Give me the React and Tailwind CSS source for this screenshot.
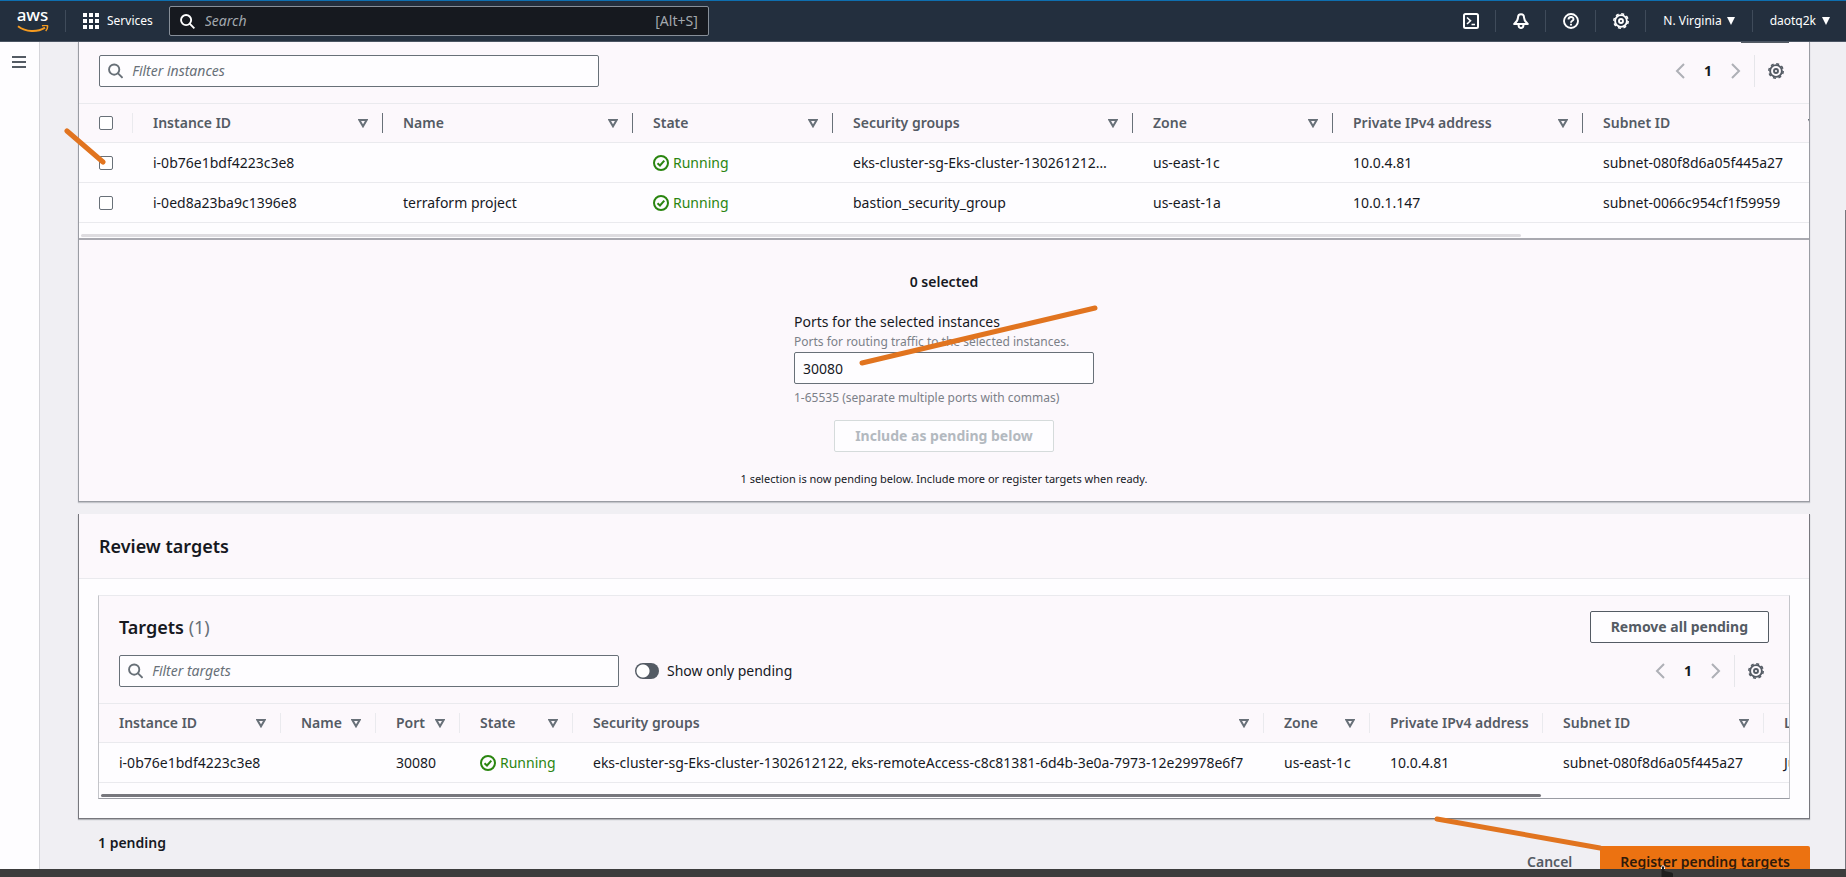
import { useState } from 'react';

const instanceCols = [
  { label: 'Instance ID', width: 'w-[250px]', key: 'id' },
  { label: 'Name', width: 'w-[250px]', key: 'name' },
  { label: 'State', width: 'w-[200px]', key: 'state' },
  { label: 'Security groups', width: 'w-[300px]', key: 'groups' },
  { label: 'Zone', width: 'w-[200px]', key: 'zone' },
  { label: 'Private IPv4 address', width: 'w-[250px]', key: 'ip' },
  { label: 'Subnet ID', width: 'w-[250px]', key: 'subnet' },
];

const instances = [
  {
    id: 'i-0b76e1bdf4223c3e8',
    name: '',
    state: 'Running',
    groups: 'eks-cluster-sg-Eks-cluster-130261212…',
    zone: 'us-east-1c',
    ip: '10.0.4.81',
    subnet: 'subnet-080f8d6a05f445a27',
  },
  {
    id: 'i-0ed8a23ba9c1396e8',
    name: 'terraform project',
    state: 'Running',
    groups: 'bastion_security_group',
    zone: 'us-east-1a',
    ip: '10.0.1.147',
    subnet: 'subnet-0066c954cf1f59959',
  },
];

const targetCols = [
  { label: 'Instance ID', width: 'w-[182px]', key: 'id', sort: true },
  { label: 'Name', width: 'w-[95px]', key: 'name', sort: true },
  { label: 'Port', width: 'w-[84px]', key: 'port', sort: true },
  { label: 'State', width: 'w-[113px]', key: 'state', sort: true },
  { label: 'Security groups', width: 'w-[691px]', key: 'groups', sort: true },
  { label: 'Zone', width: 'w-[106px]', key: 'zone', sort: true },
  { label: 'Private IPv4 address', width: 'w-[173px]', key: 'ip' },
  { label: 'Subnet ID', width: 'w-[221px]', key: 'subnet', sort: true },
  { label: 'Launch time', width: 'w-[248px]', key: 'launched' },
];

const targets = [
  {
    ...instances[0],
    groups: 'eks-cluster-sg-Eks-cluster-1302612122, eks-remoteAccess-c8c81381-6d4b-3e0a-7973-12e29978e6f7',
    port: '30080',
    launched: 'June 11, 2023',
  },
];

const SearchIcon = ({ className }) => (
  <svg viewBox="0 0 16 16" className={className} fill="none" stroke="currentColor" strokeWidth="2">
    <circle cx="6.5" cy="6.5" r="5.4" />
    <path d="M10.3 10.3 15.300 15.300" />
  </svg>
);

const GearIcon = ({ className }) => (
  <svg viewBox="0 0 16 16" className={className} fill="none" stroke="currentColor">
    <circle cx="8" cy="8" r="5.900" strokeWidth="1.900" />
    <circle cx="8" cy="8" r="7.200" strokeWidth="1.500" strokeDasharray="3 2.655" />
    <circle cx="8" cy="8" r="2" strokeWidth="1.900" />
  </svg>
);

const SortIcon = () => (
  <svg viewBox="0 0 10 9" className="h-[9px] w-[10px]" fill="none" stroke="#687078" strokeWidth="2">
    <path d="M1.3 1h7.4L5 7.3z" />
  </svg>
);

const Caret = () => (
  <svg viewBox="0 0 8 8" className="h-2 w-2" fill="currentColor">
    <path d="M0 0h8L4 8z" />
  </svg>
);

const AwsLogo = () => (
  <a href="#home" aria-label="AWS" className="flex w-[65px] flex-col items-center text-white">
    <span className="text-[17px] leading-[13px] font-medium">aws</span>
    <svg viewBox="0 0 32 9" className="mt-1 h-[9px] w-8" fill="none" stroke="#f59b20" strokeWidth="2">
      <path d="M1 1.200c8 6 19 6.500 27 1.500" />
      <path d="M25 .8c2-.6 4.500-.6 5.500 0 .3 2-.5 4-1.800 5.200" strokeWidth="1.500" />
    </svg>
  </a>
);

const Running = () => (
  <span className="flex items-center gap-1 text-[#2a8510]">
    <svg viewBox="0 0 16 16" className="h-4 w-4" fill="none" stroke="currentColor" strokeWidth="2">
      <circle cx="8" cy="8" r="7" />
      <path d="m4.500 8.200 2.500 2.300 4.300-4.800" />
    </svg>
    Running
  </span>
);

const Filter = ({ label }) => (
  <label className="flex h-8 w-[500px] items-center gap-[9px] rounded-[2px] border border-[#687078] bg-[#fefdff] px-2">
    <SearchIcon className="h-4 w-4 text-[#687078]" />
    <input
      type="search"
      aria-label={label}
      placeholder={label}
      className="w-full bg-transparent text-sm outline-none placeholder:text-[#687078] placeholder:italic"
    />
  </label>
);

const Pagination = () => (
  <div className="flex h-8 items-center">
    <button type="button" aria-label="Previous page" className="px-2">
      <svg viewBox="0 0 10 16" className="h-4 w-[10px]" fill="none" stroke="#aeb0b6" strokeWidth="2">
        <path d="M9 1 2 8l7 7" />
      </svg>
    </button>
    <button type="button" className="w-[30px] text-center text-sm font-bold">1</button>
    <button type="button" aria-label="Next page" className="px-2">
      <svg viewBox="0 0 10 16" className="h-4 w-[10px]" fill="none" stroke="#aeb0b6" strokeWidth="2">
        <path d="m1 1 7 7-7 7" />
      </svg>
    </button>
    <span className="ml-[5px] h-8 w-px bg-[#e6e6ea]" />
    <button type="button" aria-label="Preferences" className="pr-[5px] pl-[13px] text-[#545b64]">
      <GearIcon className="h-4 w-4" />
    </button>
  </div>
);

const HeadCell = ({ col, sort, divider }) => (
  <th scope="col" className={`${col.width} p-0 text-left font-semibold text-[#545b64]`}>
    <div className={`flex h-5 items-center justify-between border-r pr-[14px] pl-5 ${divider}`}>
      <span className="whitespace-nowrap">{col.label}</span>
      {sort && <SortIcon />}
    </div>
  </th>
);

const Cell = ({ col, row }) => (
  <td className="py-0 pr-0 pl-5 whitespace-nowrap">{col.key === 'state' ? <Running /> : row[col.key]}</td>
);

const TopBar = () => (
  <header className="flex h-[42px] items-center border-t border-b border-t-[#0e6fb0] border-b-[#4b5563] bg-[#232f3e] text-xs text-white">
    <AwsLogo />
    <span className="h-[22px] w-px bg-[#3f4b5a]" />
    <button type="button" className="flex items-center gap-2 pr-4 pl-[17px]">
      <svg viewBox="0 0 16 16" className="h-4 w-4" fill="currentColor">
        {[0, 6, 12].map((y) => [0, 6, 12].map((x) => <rect key={`${x}-${y}`} x={x} y={y} width="4" height="4" />))}
      </svg>
      Services
    </button>
    <label className="flex h-[30px] w-[540px] items-center gap-[10px] rounded-[2px] border border-[#878f99] bg-[#16191f] px-[10px] text-sm">
      <SearchIcon className="h-[15px] w-[15px] text-white" />
      <input
        type="search"
        aria-label="Search"
        placeholder="Search"
        className="flex-1 bg-transparent outline-none placeholder:text-[#a2a8ae] placeholder:italic"
      />
      <span className="text-[#a2a8ae]">[Alt+S]</span>
    </label>
    <nav className="ml-auto flex items-center divide-x divide-[#3f4b5a]">
      <button type="button" aria-label="CloudShell" className="flex h-[22px] w-[50px] items-center justify-center">
        <svg viewBox="0 0 16 16" className="h-4 w-4" fill="none" stroke="currentColor" strokeWidth="2">
          <rect x="1" y="1" width="14" height="14" rx="1.500" />
          <path d="m4 4.500 3.500 3.300L4 11M8.500 11.500H12" strokeWidth="1.600" />
        </svg>
      </button>
      <button type="button" aria-label="Notifications" className="flex h-[22px] w-[50px] items-center justify-center">
        <svg viewBox="0 0 16 16" className="h-4 w-4" fill="none" stroke="currentColor" strokeWidth="2" strokeLinejoin="round">
          <path d="M8 1.200C5.800 1.200 5 2.700 5 4.500 5 7.500 3.500 9 1.200 11h13.600C12.500 9 11 7.500 11 4.500c0-1.800-.8-3.300-3-3.300z" />
          <path d="M5.500 11.500c0 4.700 5 4.700 5 0" />
        </svg>
      </button>
      <button type="button" aria-label="Help" className="flex h-[22px] w-[50px] items-center justify-center">
        <svg viewBox="0 0 16 16" className="h-4 w-4" fill="none" stroke="currentColor" strokeWidth="1.900">
          <circle cx="8" cy="8" r="7" />
          <path d="M5.500 6.500c0-3.200 5-3.200 5-.3 0 1.700-2.500 1.500-2.500 3.500M8 10.800v1.800" />
        </svg>
      </button>
      <button type="button" aria-label="Settings" className="flex h-[22px] w-[50px] items-center justify-center">
        <GearIcon className="h-4 w-4" />
      </button>
      <button type="button" className="flex h-[22px] items-center gap-[5px] px-[17px]">
        N. Virginia <Caret />
      </button>
      <button type="button" className="flex h-[22px] items-center gap-[6px] pr-4 pl-[17px]">
        daotq2k <Caret />
      </button>
    </nav>
  </header>
);

const InstancesCard = ({ ports, onPortsChange }) => (
  <section className="border-r border-b border-l border-[#9a9ca3] bg-[#fcf8fc] shadow-[0_1px_1px_#c4c5ca]">
    <div className="flex justify-end px-5">
      <div className="h-px w-12 bg-[#545b64]" />
    </div>
    <div className="flex items-center justify-between px-5 pt-3 pb-4">
      <Filter label="Filter instances" />
      <Pagination />
    </div>
    <div className="overflow-hidden border-b-2 border-[#a9a9b0] bg-[#fefdff]">
      <table className="w-[1754px] table-fixed border-collapse">
        <thead>
          <tr className="h-[39px] border-y border-[#eaeaee] bg-[#fcf8fc]">
            <th scope="col" className="w-[54px] p-0">
              <div className="flex h-5 items-center border-r border-[#eaeaee] pl-5">
                <input type="checkbox" aria-label="Select all" className="h-[14px] w-[14px] appearance-none rounded-[2px] border border-[#687078] bg-white" />
              </div>
            </th>
            {instanceCols.map((col) => (
              <HeadCell key={col.key} col={col} sort divider="border-[#687078]" />
            ))}
          </tr>
        </thead>
        <tbody>
          {instances.map((row) => (
            <tr key={row.id} className="h-10 border-b border-[#eaeaee]">
              <td className="p-0 pl-5">
                <input type="checkbox" aria-label={`Select ${row.id}`} className="block h-[14px] w-[14px] appearance-none rounded-[2px] border border-[#687078] bg-white" />
              </td>
              {instanceCols.map((col) => (
                <Cell key={col.key} col={col} row={row} />
              ))}
            </tr>
          ))}
        </tbody>
      </table>
      <div className="px-[2px] pt-[11px] pb-px">
        <div className="h-[3px] w-[1440px] max-w-full rounded-full bg-[#dedce0]" />
      </div>
    </div>
    <div className="flex flex-col items-center pt-8 pb-[13px]">
      <p className="font-semibold">0 selected</p>
      <div className="mt-5 flex w-[300px] flex-col">
        <label htmlFor="ports">Ports for the selected instances</label>
        <span className="text-xs leading-5 text-[#7b8088]">Ports for routing traffic to the selected instances.</span>
        <input
          id="ports"
          value={ports}
          onChange={(e) => onPortsChange(e.target.value)}
          className="h-8 rounded-[2px] border border-[#687078] bg-[#fefdff] px-2 outline-none"
        />
        <span className="mt-1 text-xs leading-5 text-[#7b8088]">1-65535 (separate multiple ports with commas)</span>
      </div>
      <button type="button" disabled className="mt-3 h-8 rounded-[2px] border border-[#d5dbdb] bg-[#fefdff] px-5 font-bold text-[#b3b9bf]">
        Include as pending below
      </button>
      <p className="mt-[18px] text-[11px] leading-[18px]">
        1 selection is now pending below. Include more or register targets when ready.
      </p>
    </div>
  </section>
);

const ReviewCard = () => (
  <section className="mt-3 border-r border-b border-l border-[#77777d] bg-[#fefdff] shadow-[0_1px_1px_#b4b5ba]">
    <div className="border-b border-[#eaeaee] bg-[#fcf8fc] px-5 py-5">
      <h2 className="text-lg leading-6 font-semibold">Review targets</h2>
    </div>
    <div className="px-[19px] pt-4 pb-[19px]">
      <div className="overflow-hidden border border-t-[#eaeaee] border-r-[#c4c5ca] border-b-[#9a9ca3] border-l-[#c4c5ca]">
        <div className="bg-[#fcf8fc] px-5 pt-[15px] pb-4">
          <div className="flex items-center justify-between">
            <h3 className="text-lg leading-6 font-semibold">
              Targets <span className="font-normal text-[#687078]">(1)</span>
            </h3>
            <button type="button" className="h-8 rounded-[2px] border border-[#545b64] bg-[#fefdff] px-5 font-bold text-[#545b64]">
              Remove all pending
            </button>
          </div>
          <div className="mt-3 flex items-center">
            <Filter label="Filter targets" />
            <label className="ml-4 flex items-center gap-2">
              <input
                type="checkbox"
                role="switch"
                className="h-4 w-6 appearance-none rounded-full bg-[#545b64] bg-[radial-gradient(circle_at_8px_8px,white_6px,transparent_7px)]"
              />
              Show only pending
            </label>
            <div className="ml-auto">
              <Pagination />
            </div>
          </div>
        </div>
        <div className="bg-[#fefdff]">
          <table className="w-[1913px] table-fixed border-collapse">
            <thead>
              <tr className="h-[39px] border-y border-[#eaeaee] bg-[#fcf8fc]">
                {targetCols.map((col) => (
                  <HeadCell key={col.key} col={col} sort={col.sort} divider="border-[#eaeaee]" />
                ))}
              </tr>
            </thead>
            <tbody>
              {targets.map((row) => (
                <tr key={row.id} className="h-10 border-b border-[#eaeaee]">
                  {targetCols.map((col) => (
                    <Cell key={col.key} col={col} row={row} />
                  ))}
                </tr>
              ))}
            </tbody>
          </table>
          <div className="px-[2px] pt-[11px] pb-px">
            <div className="h-[3px] w-[1440px] max-w-full rounded-full bg-[#77777d]" />
          </div>
        </div>
      </div>
    </div>
  </section>
);

// marker strokes drawn over the console
const Markers = () => (
  <svg className="pointer-events-none absolute top-0 left-0 h-[877px] w-[1846px]" fill="none" stroke="#e1741f" strokeWidth="5" strokeLinecap="round">
    <path d="M67 131 103 162M862 363 1095 308M1437 819 1600 848" />
  </svg>
);

const HandCursor = () => (
  <svg viewBox="0 0 16 12" className="pointer-events-none absolute right-[172px] bottom-0 h-3 w-4">
    <path d="M3.500 12V2.500c0-2.300 3-2.300 3 0V6l7 1.500c1 .3 1.500 1 1.500 2V12z" fill="#1e1e1e" />
    <path d="M3.500 4V2.500c0-2.300 3-2.300 3 0V4" fill="none" stroke="#fff" />
  </svg>
);

export default function App() {
  const [ports, setPorts] = useState('30080');

  return (
    <div className="relative flex h-screen flex-col overflow-hidden bg-[#f0eff3] font-['Noto_Sans',sans-serif] text-sm text-[#16191f]">
      <TopBar />
      <div className="flex min-h-0 flex-1">
        <aside className="w-10 shrink-0 border-r border-[#d5d5da] bg-[#fefdff] pt-[14px] pl-3">
          <button type="button" aria-label="Open navigation" className="block">
            <svg viewBox="0 0 14 12" className="h-3 w-[14px]" stroke="#545b64" strokeWidth="2">
              <path d="M0 1h14M0 6h14M0 11h14" />
            </svg>
          </button>
        </aside>
        <main className="min-w-0 flex-1 pr-9 pl-[38px]">
          <InstancesCard ports={ports} onPortsChange={setPorts} />
          <ReviewCard />
          <footer className="flex items-start justify-between pl-5">
            <p className="pt-[14px] font-semibold">1 pending</p>
            <div className="mt-[27px] flex gap-2">
              <button type="button" className="h-8 px-5 font-semibold text-[#545b64]">Cancel</button>
              <button type="button" className="h-8 rounded-[2px] bg-[#ec7211] px-5 font-semibold text-[#2f1a0a]">
                Register pending targets
              </button>
            </div>
          </footer>
        </main>
      </div>
      <div className="absolute right-0 bottom-0 h-[667px] w-px bg-[#77777d]" />
      <Markers />
      <div className="absolute inset-x-0 bottom-0 h-2 bg-[#3c3c3c]" />
      <HandCursor />
    </div>
  );
}
